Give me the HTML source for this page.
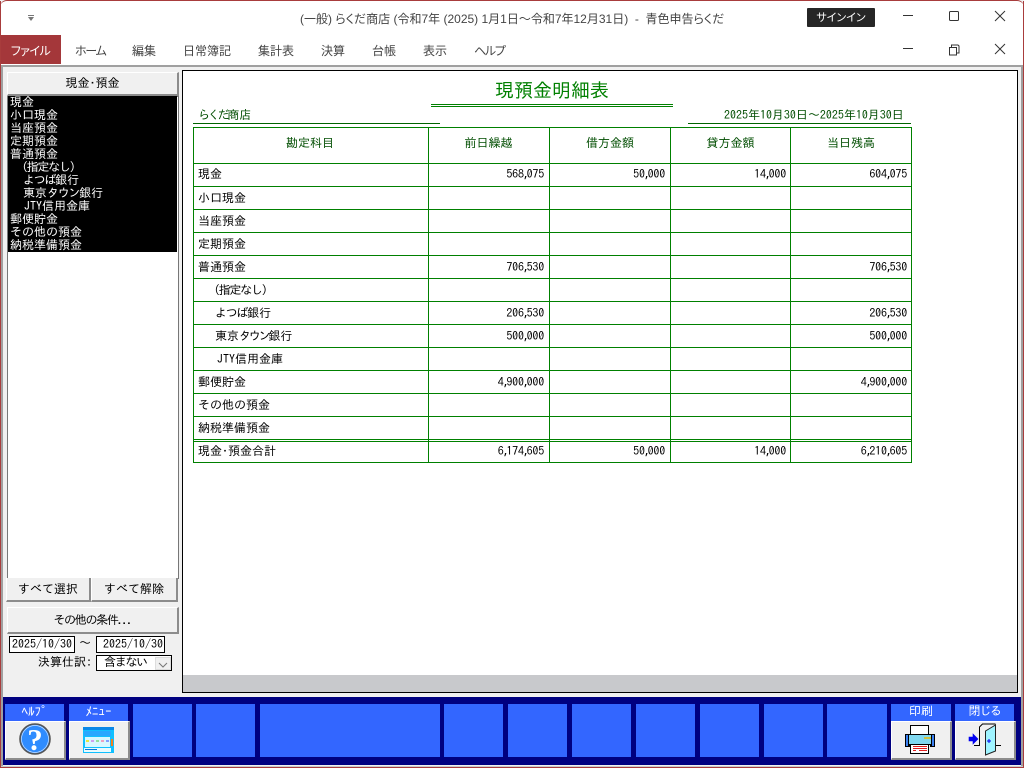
<!DOCTYPE html>
<html lang="ja"><head><meta charset="utf-8"><title>現預金明細表</title>
<style>
html,body{margin:0;padding:0;width:1024px;height:768px;overflow:hidden;background:#f0f0f0}
body{position:relative;font-family:"Liberation Sans","IPAGothic","Noto Sans CJK JP",sans-serif;font-size:12px;color:#000}
div{position:absolute;box-sizing:border-box;white-space:nowrap}
.g{font-family:"IPAGothic","Liberation Sans","Noto Sans CJK JP",sans-serif;font-size:12px;line-height:13px}
.p{font-family:"Liberation Sans","Noto Sans CJK JP",sans-serif;font-feature-settings:"palt"}
.m{top:43px;height:16px;line-height:16px;font-family:"Liberation Sans","Noto Sans CJK JP",sans-serif;font-size:12px;color:#444;font-feature-settings:"palt"}
.h{background:#008000;height:1px;left:193px;width:719px}
.v{background:#008000;width:1px;top:127px;height:336px}
.c{left:198px;height:14px}
.i{left:214px;height:14px}
.n{text-align:right;width:80px;height:14px;letter-spacing:-.2px}
.n i{font-style:normal;letter-spacing:-3.200px}
.q{letter-spacing:-1.300px}
.r{letter-spacing:-2.200px}
.th{top:137px;text-align:center;color:#004d00;height:14px}
.btn{background:#f0f0f0;border-right:2px solid #8c8c8c;border-bottom:2px solid #8c8c8c;border-top:1px solid #fff;border-left:1px solid #fff;text-align:center}
.b{background:#3366ff;top:704px;height:53px}
.l{background:#3366ff;top:704px;height:17px;width:59px;color:#fff;text-align:center;line-height:15px}
.k{top:721px;height:39px;width:61px}
</style></head><body>
<div style="left:0;top:0;width:1024px;height:65px;background:#fff;border-radius:7px 7px 0 0;border-top:1px solid #a83c3c"></div>
<div class="p" style="left:0;top:35px;width:61px;height:29px;background:#a4373a;color:#fff;text-align:center;line-height:32px;letter-spacing:-.5px">ファイル</div>
<div style="left:28px;top:15px;width:6px;height:1px;background:#777"></div>
<div style="left:28px;top:17px;width:0;height:0;border:3px solid transparent;border-top:4px solid #777"></div>
<div class="p" style="left:300px;top:11px;height:16px;line-height:16px;color:#444;font-size:12px">(一般) らくだ商店 (令和7年 (2025) 1月1日〜令和7年12月31日)&nbsp; -&nbsp; 青色申告らくだ</div>
<div class="p" style="left:807px;top:8px;width:68px;height:19px;background:#262626;color:#fff;text-align:center;line-height:20px;border-radius:1px;font-size:11px">サインイン</div>
<div class="m" style="left:75px;letter-spacing:-1.300px">ホーム</div><div class="m" style="left:132px">編集</div><div class="m" style="left:183px">日常簿記</div><div class="m" style="left:258px">集計表</div><div class="m" style="left:321px">決算</div><div class="m" style="left:372px">台帳</div><div class="m" style="left:423px">表示</div><div class="m" style="left:474px;letter-spacing:-1.300px">ヘルプ</div>
<svg style="position:absolute;left:890px;top:0" width="134" height="65" fill="none" stroke="#333" stroke-width="1"><path d="M13 15.500h10M13 48.500h10"/><rect x="59.500" y="11.500" width="9" height="9" rx="1"/><path d="M59.500 47.500h7v7.500h-7zM61.500 47v-2h6.500l1 1v7h-2"/><path d="M105 11l10 10M115 11l-10 10M105 44l10 10M115 44l-10 10"/></svg>
<div style="left:0;top:65px;width:1024px;height:2px;background:#a0a0a0"></div>
<div style="left:0;top:1px;width:1px;height:766px;background:#a83c3c"></div><div style="left:1023px;top:1px;width:1px;height:766px;background:#a83c3c"></div>
<div style="left:0;top:767px;width:1024px;height:1px;background:#a83c3c"></div><div style="left:1px;top:766px;width:1022px;height:1px;background:#c9c9c9"></div>
<div style="left:1px;top:65px;width:2px;height:701px;background:#a0a0a0"></div><div style="left:1021px;top:65px;width:2px;height:701px;background:#a0a0a0"></div>

<div class="btn g" style="left:7px;top:72px;width:172px;height:24px;line-height:21px">現金･預金</div>
<div style="left:7px;top:96px;width:172px;height:483px;background:#fff;border:1px solid #777"></div>
<div class="g" style="left:8px;top:96px;width:169px;height:156px;background:#000;color:#fff;padding-left:2px">現金<br>小口現金<br>当座預金<br>定期預金<br>普通預金<br><span class="q" style="margin-left:12px">(指定なし)</span><br><span style="margin-left:13px"><span class="q">よつば</span>銀行</span><br><span style="margin-left:13px">東京<span class="q">タウン</span>銀行</span><br><span style="margin-left:14px">JTY信用金庫</span><br>郵便貯金<br>その他の預金<br>納税準備預金</div>
<div class="btn g" style="left:6px;top:578px;width:85px;height:24px;line-height:22px;border-top:0">すべて選択</div>
<div class="btn g" style="left:91px;top:578px;width:87px;height:24px;line-height:22px;border-top:0">すべて解除</div>
<div class="btn g" style="left:7px;top:607px;width:172px;height:27px;line-height:24px"><span class="q">その他の条件...</span></div>
<div class="g" style="left:9px;top:636px;width:66px;height:17px;background:#fff;border:1px solid #000;line-height:15px;text-align:center">2025/10/30</div>
<div class="g" style="left:79px;top:637px">〜</div>
<div class="g" style="left:96px;top:636px;width:69px;height:17px;background:#fff;border:1px solid #000;line-height:15px;padding-left:6px">2025/10/30</div>
<div class="g" style="left:38px;top:656px">決算仕訳:</div>
<div class="g" style="left:96px;top:655px;width:76px;height:16px;background:#fff;border:1px solid #000;line-height:13px;padding-left:7px"><span class="q">含まない</span></div>
<div style="left:155px;top:657px;width:16px;height:13px;background:#f0f0f0;border:1px solid #ddd"></div>
<svg style="position:absolute;left:155px;top:657px" width="16" height="13" fill="none" stroke="#777"><path d="M4 6l4 4 4-4"/></svg>

<div style="left:182px;top:70px;width:836px;height:623px;background:#fff;border:1px solid #000"></div>
<div style="left:183px;top:675px;width:834px;height:17px;background:#c8c9cc"></div>
<div class="g" style="left:495px;top:80px;font-size:19px;line-height:21px;color:#008000">現預金明細表</div>
<div style="left:431px;top:104px;width:242px;height:1px;background:#008000"></div><div style="left:431px;top:106px;width:242px;height:1px;background:#008000"></div>
<div class="g" style="left:198px;top:109px;color:#004d00"><span class="r">らくだ</span>商店</div>
<div class="g" style="left:724px;top:109px;color:#004d00;letter-spacing:-.01px">2025年10月30日〜2025年10月30日</div>
<div style="left:193px;top:123px;width:247px;height:1px;background:#006400"></div><div style="left:688px;top:123px;width:223px;height:1px;background:#006400"></div>

<div class="h" style="top:127px"></div><div class="h" style="top:163px"></div><div class="h" style="top:186px"></div><div class="h" style="top:209px"></div><div class="h" style="top:232px"></div><div class="h" style="top:255px"></div><div class="h" style="top:278px"></div><div class="h" style="top:301px"></div><div class="h" style="top:324px"></div><div class="h" style="top:347px"></div><div class="h" style="top:370px"></div><div class="h" style="top:393px"></div><div class="h" style="top:416px"></div><div class="h" style="top:439px"></div><div class="h" style="top:441px"></div><div class="h" style="top:462px"></div>
<div class="v" style="left:193px"></div><div class="v" style="left:428px"></div><div class="v" style="left:549px"></div><div class="v" style="left:670px"></div><div class="v" style="left:790px"></div><div class="v" style="left:911px"></div>

<div class="g th" style="left:194px;width:232px">勘定科目</div><div class="g th" style="left:429px;width:119px">前日繰越</div><div class="g th" style="left:550px;width:120px">借方金額</div><div class="g th" style="left:671px;width:119px">貸方金額</div><div class="g th" style="left:791px;width:120px">当日残高</div>
<div class="g c" style="top:168px">現金</div><div class="g c" style="top:192px">小口現金</div><div class="g c" style="top:215px">当座預金</div><div class="g c" style="top:238px">定期預金</div><div class="g c" style="top:261px">普通預金</div>
<div class="g i" style="top:284px"><span class="q">(指定なし)</span></div><div class="g i" style="top:307px;left:215px"><span class="q">よつば</span>銀行</div><div class="g i" style="top:330px;left:215px">東京<span class="r">タウン</span>銀行</div><div class="g i" style="top:353px;left:217px">JTY信用金庫</div>
<div class="g c" style="top:376px">郵便貯金</div><div class="g c" style="top:399px">その他の預金</div><div class="g c" style="top:422px">納税準備預金</div><div class="g c" style="top:445px">現金･預金合計</div>

<div class="g n" style="left:464px;top:168px">568<i>,</i>075</div><div class="g n" style="left:585px;top:168px">50<i>,</i>000</div><div class="g n" style="left:706px;top:168px">14<i>,</i>000</div><div class="g n" style="left:827px;top:168px">604<i>,</i>075</div>
<div class="g n" style="left:464px;top:261px">706<i>,</i>530</div><div class="g n" style="left:827px;top:261px">706<i>,</i>530</div>
<div class="g n" style="left:464px;top:307px">206<i>,</i>530</div><div class="g n" style="left:827px;top:307px">206<i>,</i>530</div>
<div class="g n" style="left:464px;top:330px">500<i>,</i>000</div><div class="g n" style="left:827px;top:330px">500<i>,</i>000</div>
<div class="g n" style="left:464px;top:376px">4<i>,</i>900<i>,</i>000</div><div class="g n" style="left:827px;top:376px">4<i>,</i>900<i>,</i>000</div>
<div class="g n" style="left:464px;top:445px">6<i>,</i>174<i>,</i>605</div><div class="g n" style="left:585px;top:445px">50<i>,</i>000</div><div class="g n" style="left:706px;top:445px">14<i>,</i>000</div><div class="g n" style="left:827px;top:445px">6<i>,</i>210<i>,</i>605</div>

<div style="left:3px;top:697px;width:1018px;height:68px;background:#000080"></div>
<div class="l g" style="left:5px;font-size:13px">ﾍﾙﾌﾟ</div><div class="l g" style="left:69px;font-size:13px">ﾒﾆｭｰ</div>
<div class="b" style="left:133px;width:59px"></div><div class="b" style="left:196px;width:59px"></div><div class="b" style="left:260px;width:180px"></div><div class="b" style="left:444px;width:59px"></div><div class="b" style="left:508px;width:59px"></div><div class="b" style="left:572px;width:59px"></div><div class="b" style="left:636px;width:59px"></div><div class="b" style="left:700px;width:59px"></div><div class="b" style="left:764px;width:59px"></div><div class="b" style="left:827px;width:60px"></div>
<div class="l g" style="left:891px;width:60px">印刷</div><div class="l g" style="left:955px"><span class="q">閉じる</span></div>
<div class="btn k" style="left:5px"></div><div class="btn k" style="left:69px"></div><div class="btn k" style="left:891px"></div><div class="btn k" style="left:955px"></div>

<svg style="position:absolute;left:5px;top:721px" width="61" height="39"><circle cx="30" cy="18" r="15" fill="#2f8cff" stroke="#555" stroke-width="1.600"/><circle cx="30" cy="18" r="13.500" fill="none" stroke="#cfe4ff" stroke-width=".7"/><text x="30" y="29" text-anchor="middle" font-family="Liberation Serif,serif" font-weight="bold" font-size="31" fill="#fff">?</text></svg>
<svg style="position:absolute;left:83px;top:727px" width="32" height="27"><rect width="31" height="26" fill="#10c0ff"/><rect width="31" height="3" fill="#0a88e8"/><rect x="1" y="4" width="27" height="5" fill="#28a8ff"/><rect x="2" y="10" width="25" height="10" fill="#d8f8ff"/><rect x="3" y="13" width="3" height="2" fill="#e8e840"/><rect x="8" y="13" width="3" height="2" fill="#d0a0f0"/><rect x="13" y="13" width="3" height="2" fill="#90e0a0"/><rect x="18" y="13" width="3" height="2" fill="#f0a0c0"/><rect x="23" y="13" width="3" height="2" fill="#80a0ff"/><rect x="28" y="12" width="2" height="7" fill="#f08020"/><rect x="1" y="21" width="27" height="4" fill="#e8fbff"/><rect x="2" y="22" width="12" height="1" fill="#0a78d8"/></svg>
<svg style="position:absolute;left:904px;top:724px" width="32" height="32" stroke="#000" stroke-width="1"><rect x="6.500" y="1.500" width="18" height="10" fill="#fff"/><path d="M1.500 10.500h29v12h-4v-2h-21v2h-4z" fill="#80d8f0"/><path d="M1.500 10.500h3v12h-3zM27.500 10.500h3v12h-3z" fill="#3b80f0"/><rect x="20" y="13" width="7" height="2" fill="#d0c040" stroke="none"/><rect x="7" y="20" width="18" height="3" fill="#000" stroke="none"/><rect x="6.500" y="20.500" width="18" height="9" fill="#fff"/><path d="M9 22.500h14M9 24.500h14M9 26.500h3M15 26.500h8" stroke="#e02020"/></svg>
<svg style="position:absolute;left:968px;top:722px" width="34" height="36" fill="none" stroke="#000"><path d="M1 15h4v-3l5 5-5 5v-3h-4z" fill="#0000f0" stroke="#0000f0" stroke-width=".6"/><path d="M6 23.500h6M33 23.500h-9"/><path d="M11.500 23v-18l3-3h13"/><path d="M17.500 9l10-6v26l-10 4z" fill="#9ff4ff" stroke="#222"/><path d="M21 17v4M19 19h4" stroke="#0000f0"/></svg>
</body></html>
